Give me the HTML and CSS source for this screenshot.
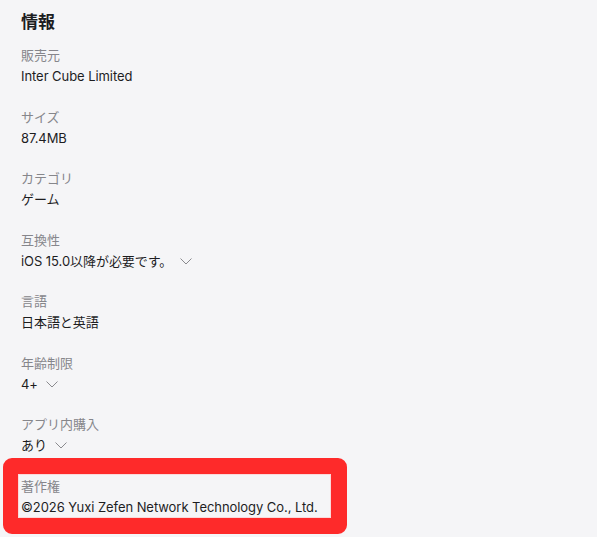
FILE: index.html
```html
<!DOCTYPE html>
<html lang="ja">
<head>
    <meta charset="UTF-8">
    <meta name="viewport" content="width=device-width, initial-scale=1.0">
    <title>情報</title>
    <link rel="stylesheet" href="styles.css">
</head>
<body>
    <section class="info">
        <h2>情報</h2>

        <div class="item">
            <p class="label">販売元</p>
            <p class="value">Inter Cube Limited</p>
        </div>

        <div class="item">
            <p class="label">サイズ</p>
            <p class="value">87.4MB</p>
        </div>

        <div class="item">
            <p class="label">カテゴリ</p>
            <p class="value">ゲーム</p>
        </div>

        <div class="item">
            <p class="label">互換性</p>
            <p class="value">iOS 15.0以降が必要です。<span class="chevron"><svg width="12" height="7" viewBox="0 0 12 7"><path d="M0.5 0.5 L6 6 L11.5 0.5" fill="none" stroke="#8a8a8e" stroke-width="1"/></svg></span></p>
        </div>

        <div class="item">
            <p class="label">言語</p>
            <p class="value">日本語と英語</p>
        </div>

        <div class="item">
            <p class="label">年齢制限</p>
            <p class="value">4+<span class="chevron"><svg width="12" height="7" viewBox="0 0 12 7"><path d="M0.5 0.5 L6 6 L11.5 0.5" fill="none" stroke="#8a8a8e" stroke-width="1"/></svg></span></p>
        </div>

        <div class="item">
            <p class="label">アプリ内購入</p>
            <p class="value">あり<span class="chevron"><svg width="12" height="7" viewBox="0 0 12 7"><path d="M0.5 0.5 L6 6 L11.5 0.5" fill="none" stroke="#8a8a8e" stroke-width="1"/></svg></span></p>
        </div>

        <div class="item">
            <p class="label">著作権</p>
            <p class="value">©2026 Yuxi Zefen Network Technology Co., Ltd.</p>
            <div class="mark"></div>
        </div>
    </section>
</body>
</html>
```

FILE: styles.css
```css
body {
    margin: 0;
    background: #f5f5f7;
    font-family: 'Inter', 'Noto Sans CJK JP', sans-serif;
    color: #1d1d1f;
}
.info {
    padding: 10px 21px;
}
h2 {
    margin: 0 0 11px;
    font-size: 17px;
    line-height: 24px;
    font-weight: bold;
}
.item {
    position: relative;
    margin-bottom: 19.5px;
}
.label, .value {
    margin: 0;
    font-size: 13px;
    line-height: 21px;
}
.label {
    color: #86868b;
}
.value {
    display: flex;
    align-items: center;
    letter-spacing: -0.06px;
}
.chevron {
    display: inline-flex;
    margin-left: 8px;
}
/* red highlight frame around the copyright row */
.mark {
    position: absolute;
    left: -18px;
    top: -18px;
    width: 313px;
    height: 44px;
    border: solid #fe2a2a;
    border-width: 16px 16px 16px 15px;
    border-radius: 9px;
    box-shadow: inset 0 0 0 1px #fbd9da;
}
```
